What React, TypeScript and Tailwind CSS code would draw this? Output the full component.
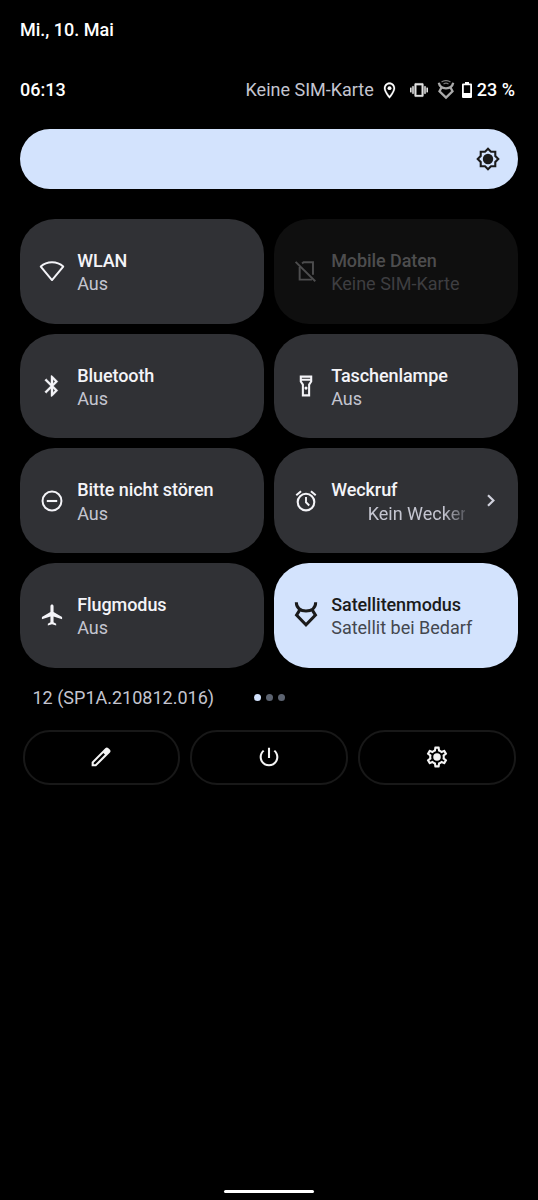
import type { ReactNode } from "react";

function Icon({
  children,
  className,
  viewBox = "0 0 24 24",
}: {
  children: ReactNode;
  className: string;
  viewBox?: string;
}) {
  return (
    <svg viewBox={viewBox} fill="currentColor" className={`shrink-0 ${className}`}>
      {children}
    </svg>
  );
}

const PADDED = "-0.5 -0.5 25 25";

const WifiShape = (
  <path
    d="M1.2 7.7C4 5.1 7.8 3.6 12 3.6s8 1.5 10.8 4.1L12 20.7z"
    fill="none"
    stroke="currentColor"
    strokeWidth="1.9"
    strokeLinejoin="round"
  />
);

const NoSimShape = (
  <g fill="none" stroke="currentColor" strokeWidth="1.9">
    <path d="M8.2 4.9 9.7 3.6h9v12" />
    <path d="M5.9 8.2v12.1h11.8" />
    <path d="M2 3.2 20.9 21.8" />
  </g>
);

const BluetoothShape = (
  <path
    d="M17.71 7.71L12 2h-1v7.59L6.41 5 5 6.41 10.59 12 5 17.59 6.41 19 11 14.41V22h1l5.71-5.71-4.3-4.29 4.3-4.29zM13 5.83l1.88 1.88L13 9.59V5.83zm1.88 10.46L13 18.17v-3.76l1.88 1.88z"
    stroke="currentColor"
    strokeWidth="0.3"
  />
);

const TorchShape = (
  <>
    <path
      fillRule="evenodd"
      d="M18 2H6v6l2 3v11h8V11l2-3V2zM16 4v1H8V4h8zM14 10.4V20h-4v-9.6L8 7.4V7h8v.4l-2 3z"
    />
    <circle cx="12" cy="14" r="1.5" />
  </>
);

const DndShape = (
  <>
    <circle cx="12" cy="12" r="9.1" fill="none" stroke="currentColor" strokeWidth="1.9" />
    <path d="M7 11h10v2H7z" />
  </>
);

const AlarmShape = (
  <>
    <path d="M22 5.72l-4.6-3.86-1.29 1.53 4.6 3.86L22 5.72zM7.88 3.39L6.6 1.86 2 5.71l1.29 1.53 4.59-3.85z" />
    <circle cx="12" cy="13" r="8" fill="none" stroke="currentColor" strokeWidth="2" />
    <path d="M12 8.2v5l3.1 3.1" fill="none" stroke="currentColor" strokeWidth="1.8" />
  </>
);

const PlaneShape = (
  <path d="M21.7 16v-2l-8.2-5V3.5C13.5 2.67 12.83 2 12 2s-1.5.67-1.5 1.5V9L2.3 14v2l8.2-2.5V19L8 20.5V22l4-1 4 1v-1.5L13.5 19v-5.5L21.7 16z" />
);

const SatelliteShape = (
  <g fill="none" stroke="currentColor" strokeWidth="2.9">
    <path d="M2.7-.2C2.7 5.2 6.6 8.1 12 8.1S21.3 5.2 21.3-.2" />
    <path d="M6.2 6.8 2.9 12.1 12 21.4l9.1-9.3-3.3-5.3" />
  </g>
);

type TileProps = {
  icon: ReactNode;
  title: string;
  state: string;
  variant?: "off" | "disabled" | "on";
  scrolling?: boolean;
};

const tileColors = {
  off: "bg-[#303135] text-[#f4f4f8]",
  disabled: "bg-[#0f0f0f] text-[#4d4d4e]",
  on: "bg-[#d3e3fd] text-[#1b1b1b]",
};
const stateColors = {
  off: "text-[#c4c5d0]",
  disabled: "text-[#3e3e41]",
  on: "text-[#44474f]",
};

function Tile({ icon, title, state, variant = "off", scrolling = false }: TileProps) {
  return (
    <div className={`flex h-[104.6px] items-center rounded-[35px] pl-[19px] ${tileColors[variant]}`}>
      <Icon viewBox={PADDED} className="size-[26px] overflow-visible">
        {icon}
      </Icon>
      <div className="ml-[12.2px] w-[134px] pt-[2px] leading-[23.5px] whitespace-nowrap">
        <div className="font-medium tracking-[-0.08px]">{title}</div>
        {scrolling ? (
          <div className="overflow-hidden pl-[36.5px] text-[#c4c5d0] [mask-image:linear-gradient(to_right,black_112px,transparent_142px)]">
            {state}
          </div>
        ) : (
          <div className={stateColors[variant]}>{state}</div>
        )}
      </div>
      {scrolling && (
        <svg viewBox="0 0 8 13" className="ml-[21.7px] h-[13px] w-2" fill="none" stroke="#d0d1dc" strokeWidth="2.2">
          <path d="M1 1.2 6.4 6.5 1 11.8" />
        </svg>
      )}
    </div>
  );
}

function FooterButton({ children }: { children: ReactNode }) {
  return (
    <button className="flex h-[55px] flex-1 items-center justify-center rounded-[27px] border-2 border-[#181818] text-[#f4f4f4]">
      <Icon viewBox={PADDED} className="size-[26px]">
        {children}
      </Icon>
    </button>
  );
}

export default function App() {
  return (
    <div className="flex h-[1200px] w-[538px] flex-col bg-black px-5 font-[Roboto,sans-serif] text-[18px] text-white">
      <div className="mt-[18px] h-6 leading-6 font-medium">Mi., 10. Mai</div>

      <div className="mt-9 flex h-6 items-center leading-6">
        <span className="font-medium">06:13</span>
        <div className="ml-auto flex items-center">
          <span className="text-[#c4c5d0]">Keine SIM-Karte</span>
          <Icon className="ml-[6px] size-[19px]">
            <path
              d="M12 2C8.13 2 5 5.13 5 9c0 5.25 7 13 7 13s7-7.75 7-13c0-3.87-3.13-7-7-7zM7 9c0-2.76 2.24-5 5-5s5 2.24 5 5c0 2.88-2.88 7.19-5 9.88C9.92 16.21 7 11.85 7 9z"
              stroke="currentColor"
              strokeWidth="0.3"
            />
            <circle cx="12" cy="9" r="2.5" />
          </Icon>
          <Icon className="ml-[11.5px] size-[18px] text-[#e2e2e2]">
            <path
              d="M0 15h2V9H0v6zm3 2h2V7H3v10zm19-8v6h2V9h-2zm-3 8h2V7h-2v10zM16.5 3h-9C6.67 3 6 3.67 6 4.5v15c0 .83.67 1.5 1.5 1.5h9c.83 0 1.5-.67 1.5-1.5v-15c0-.83-.67-1.5-1.5-1.5zM15.5 18.5H8.5V5.5h7v13z"
              stroke="currentColor"
              strokeWidth="0.3"
            />
          </Icon>
          <svg viewBox="0 0 18 20" className="ml-[9px] h-5 w-[18px]" fill="none" stroke="#aaa">
            <path d="M1.8 2.8C2.6 6.9 5.2 8.3 9 8.3s6.4-1.4 7.2-5.5" strokeWidth="2.3" />
            <path d="M4.5 7.5 2.5 11.3 9 17.6l6.5-6.3L13.5 7.5" strokeWidth="2.3" />
            <path d="M4.5 2C7 .4 11 .4 13.5 2M6.5 4c1.5-1 3.5-1 5 0" stroke="#777" strokeWidth="1.2" />
          </svg>
          <svg viewBox="0 0 10 16" className="ml-[7px] h-4 w-[10px]" fill="white">
            <path fillRule="evenodd" d="M3 0h4v1.6h2q1 0 1 1V15q0 1-1 1H1q-1 0-1-1V2.6q0-1 1-1h2zM1.8 3.3v7.7h6.4V3.3z" />
          </svg>
          <span className="mr-[3px] ml-[4.5px] font-medium">23 %</span>
        </div>
      </div>

      <div className="mt-[27.4px] flex h-[60px] shrink-0 items-center justify-end rounded-full bg-[#d3e3fd] pr-[17px] text-[#1b1b1b]">
        <Icon viewBox={PADDED} className="size-[26px]">
          <path
            fillRule="evenodd"
            d="M20 8.69V4h-4.69L12 .69 8.69 4H4v4.69L.69 12 4 15.31V20h4.69L12 23.31 15.31 20H20v-4.69L23.31 12 20 8.69zM18 14.48V18h-3.52L12 20.48 9.52 18H6v-3.52L3.52 12 6 9.52V6h3.52L12 3.52 14.48 6H18v3.52L20.48 12 18 14.48z"
          />
          <circle cx="12" cy="12" r="5" />
        </Icon>
      </div>

      <div className="mt-[29.8px] grid grid-cols-2 gap-[10px]">
        <Tile icon={WifiShape} title="WLAN" state="Aus" />
        <Tile icon={NoSimShape} title="Mobile Daten" state="Keine SIM-Karte" variant="disabled" />
        <Tile icon={BluetoothShape} title="Bluetooth" state="Aus" />
        <Tile icon={TorchShape} title="Taschenlampe" state="Aus" />
        <Tile icon={DndShape} title="Bitte nicht stören" state="Aus" />
        <Tile icon={AlarmShape} title="Weckruf" state="Kein Wecker" scrolling />
        <Tile icon={PlaneShape} title="Flugmodus" state="Aus" />
        <Tile icon={SatelliteShape} title="Satellitenmodus" state="Satellit bei Bedarf" variant="on" />
      </div>

      <div className="mt-[18px] flex h-6 items-center pl-[12.5px] text-[#c4c5d0]">
        <span className="w-[221px]">12 (SP1A.210812.016)</span>
        <div className="flex gap-[5px]">
          <span className="size-[7px] rounded-full bg-[#d3e3fd]" />
          <span className="size-[7px] rounded-full bg-[#5c6370]" />
          <span className="size-[7px] rounded-full bg-[#5c6370]" />
        </div>
      </div>

      <div className="mt-5 flex gap-[10px] px-[2.5px]">
        <FooterButton>
          <path
            fillRule="evenodd"
            d="M20.4 4.9 19.1 3.6a2.1 2.1 0 0 0-3 0L3 16.7V21h4.3L20.4 7.9a2.1 2.1 0 0 0 0-3zM6.5 19H5v-1.5L14.3 8.2l1.5 1.5z"
          />
        </FooterButton>
        <FooterButton>
          <path d="M13 3h-2v10h2V3zm4.83 2.17l-1.42 1.42C17.99 7.86 19 9.81 19 12c0 3.87-3.13 7-7 7s-7-3.13-7-7c0-2.19 1.01-4.14 2.58-5.42L6.17 5.17C4.23 6.82 3 9.26 3 12c0 4.97 4.03 9 9 9s9-4.03 9-9c0-2.74-1.23-5.18-3.17-6.83z" />
        </FooterButton>
        <FooterButton>
          <path d="M19.43 12.98c.04-.32.07-.64.07-.98 0-.34-.03-.66-.07-.98l2.11-1.65c.19-.15.24-.42.12-.64l-2-3.46c-.09-.16-.26-.25-.44-.25-.06 0-.12.01-.17.03l-2.49 1c-.52-.4-1.08-.73-1.69-.98l-.38-2.65C14.46 2.18 14.25 2 14 2h-4c-.25 0-.46.18-.49.42l-.38 2.65c-.61.25-1.17.59-1.69.98l-2.49-1c-.06-.02-.12-.03-.18-.03-.17 0-.34.09-.43.25l-2 3.46c-.13.22-.07.49.12.64l2.11 1.65c-.04.32-.07.65-.07.98 0 .33.03.66.07.98l-2.11 1.65c-.19.15-.24.42-.12.64l2 3.46c.09.16.26.25.44.25.06 0 .12-.01.17-.03l2.49-1c.52.4 1.08.73 1.69.98l.38 2.65c.03.24.24.42.49.42h4c.25 0 .46-.18.49-.42l.38-2.65c.61-.25 1.17-.59 1.69-.98l2.49 1c.06.02.12.03.18.03.17 0 .34-.09.43-.25l2-3.46c.12-.22.07-.49-.12-.64l-2.11-1.65zm-1.98-1.71c.04.31.05.52.05.73 0 .21-.02.43-.05.73l-.14 1.13.89.7 1.08.84-.7 1.21-1.27-.51-1.04-.42-.9.68c-.43.32-.84.56-1.25.73l-1.06.43-.16 1.13-.2 1.35h-1.4l-.19-1.35-.16-1.13-1.06-.43c-.43-.18-.83-.41-1.23-.71l-.91-.7-1.06.43-1.27.51-.7-1.21 1.08-.84.89-.7-.14-1.13c-.03-.31-.05-.54-.05-.74s.02-.43.05-.73l.14-1.13-.89-.7-1.08-.84.7-1.21 1.27.51 1.04.42.9-.68c.43-.32.84-.56 1.25-.73l1.06-.43.16-1.13.2-1.35h1.39l.19 1.35.16 1.13 1.06.43c.43.18.83.41 1.23.71l.91.7 1.06-.43 1.27-.51.7 1.21-1.07.85-.89.7.14 1.13z" />
          <circle cx="12" cy="12" r="3.6" />
        </FooterButton>
      </div>

      <div className="mt-auto mb-[7px] h-[3px] w-[90px] self-center rounded-full bg-white" />
    </div>
  );
}
